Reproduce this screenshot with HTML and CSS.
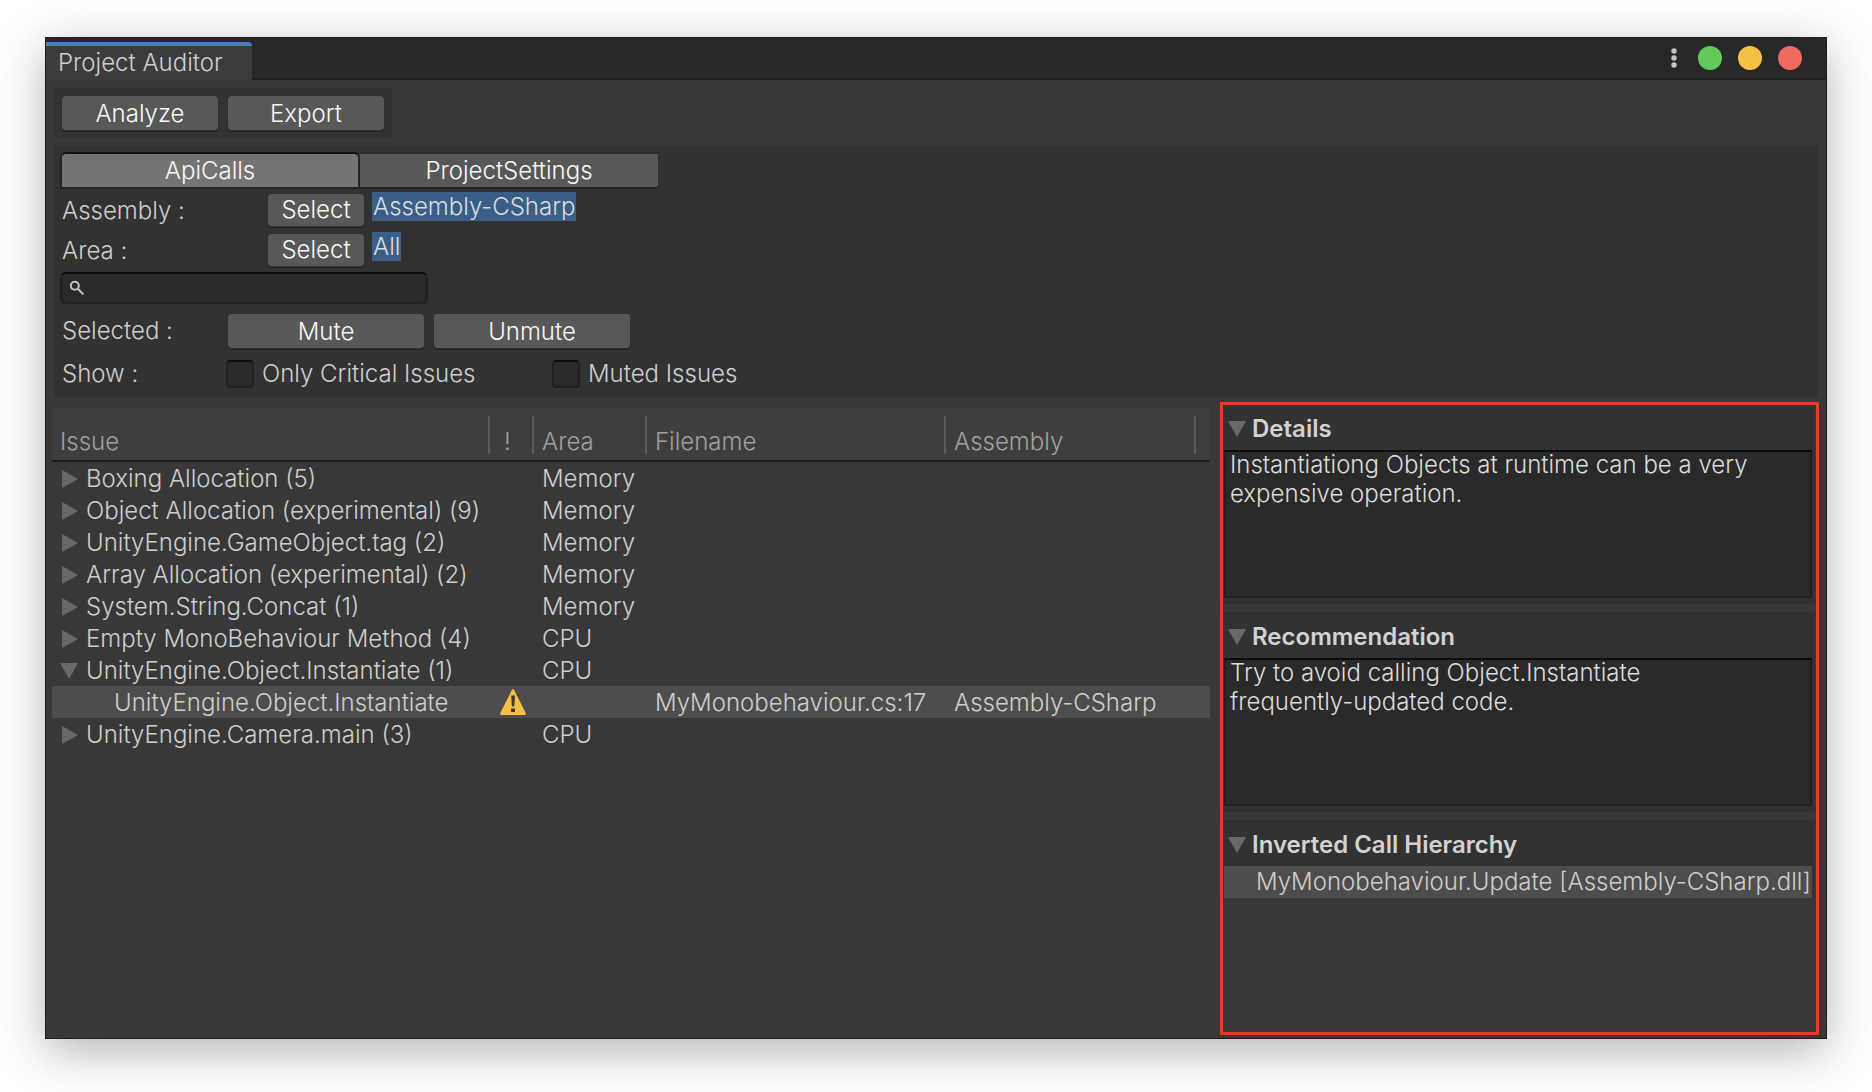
FILE: index.html
```html
<!DOCTYPE html>
<html lang="en">
<head>
<meta charset="utf-8">
<title>Project Auditor</title>
<link rel="stylesheet" href="styles.css">
</head>
<body>
<svg class="sprites" aria-hidden="true">
  <symbol id="closed" viewBox="0 0 18 18"><path d="M2 0 18 9 2 18z"/></symbol>
  <symbol id="open" viewBox="0 0 18 18"><path d="M0 1h18L9 17z"/></symbol>
</svg>
<div class="window">
  <header class="titlebar">
    <h1 class="window-tab">Project Auditor</h1>
    <div class="window-controls">
      <button class="menu" aria-label="Menu"><svg width="6" height="20" viewBox="0 0 6 20"><circle cx="3" cy="3" r="2.7"/><circle cx="3" cy="10" r="2.7"/><circle cx="3" cy="17" r="2.7"/></svg></button>
      <button class="dot green" aria-label="Minimize"></button>
      <button class="dot yellow" aria-label="Maximize"></button>
      <button class="dot red" aria-label="Close"></button>
    </div>
  </header>

  <div class="toolbar">
    <button class="btn action">Analyze</button>
    <button class="btn action">Export</button>
  </div>

  <section class="filters">
    <nav class="tabs">
      <button class="tab active">ApiCalls</button>
      <button class="tab">ProjectSettings</button>
    </nav>
    <div class="filter-row">
      <span class="filter-name">Assembly :</span>
      <button class="btn select">Select</button>
      <span class="value">Assembly-CSharp</span>
    </div>
    <div class="filter-row">
      <span class="filter-name">Area :</span>
      <button class="btn select">Select</button>
      <span class="value">All</span>
    </div>
    <label class="search">
      <svg width="16" height="16" viewBox="0 0 16 16"><circle cx="5.8" cy="5.8" r="4" /><path d="M8.8 8.8 14.4 14.4"/></svg>
      <input type="text" aria-label="Search issues">
    </label>
    <div class="selected-row">
      <span class="row-name">Selected :</span>
      <button class="btn mute">Mute</button>
      <button class="btn mute">Unmute</button>
    </div>
    <div class="show-row">
      <span class="row-name">Show :</span>
      <label class="check"><input type="checkbox">Only Critical Issues</label>
      <label class="check"><input type="checkbox">Muted Issues</label>
    </div>
  </section>

  <main class="content">
    <div class="issues">
      <table>
        <colgroup><col><col class="c-flag"><col class="c-area"><col class="c-file"><col class="c-assembly"><col class="c-end"></colgroup>
        <thead>
          <tr><th><span>Issue</span></th><th class="flag"><span>!</span></th><th><span>Area</span></th><th><span>Filename</span></th><th><span>Assembly</span></th><td></td></tr>
        </thead>
        <tbody>
          <tr><td><button class="fold"><svg><use href="#closed"/></svg>Boxing Allocation (5)</button></td><td></td><td>Memory</td><td></td><td></td><td></td></tr>
          <tr><td><button class="fold"><svg><use href="#closed"/></svg>Object Allocation (experimental) (9)</button></td><td></td><td>Memory</td><td></td><td></td><td></td></tr>
          <tr><td><button class="fold"><svg><use href="#closed"/></svg>UnityEngine.GameObject.tag (2)</button></td><td></td><td>Memory</td><td></td><td></td><td></td></tr>
          <tr><td><button class="fold"><svg><use href="#closed"/></svg>Array Allocation (experimental) (2)</button></td><td></td><td>Memory</td><td></td><td></td><td></td></tr>
          <tr><td><button class="fold"><svg><use href="#closed"/></svg>System.String.Concat (1)</button></td><td></td><td>Memory</td><td></td><td></td><td></td></tr>
          <tr><td><button class="fold"><svg><use href="#closed"/></svg>Empty MonoBehaviour Method (4)</button></td><td></td><td>CPU</td><td></td><td></td><td></td></tr>
          <tr><td><button class="fold"><svg><use href="#open"/></svg>UnityEngine.Object.Instantiate (1)</button></td><td></td><td>CPU</td><td></td><td></td><td></td></tr>
          <tr class="selected"><td class="child">UnityEngine.Object.Instantiate</td><td class="warn"><svg width="26" height="26" viewBox="0 0 26 26" role="img" aria-label="Critical"><path class="sign" d="M12 .8q1-1.400 2 0L25.700 24q.5 2-1 2H1.300q-1.500 0-1-2z"/><path class="mark" d="M11.200 6.500h3.800l-.7 11h-2.400zM11 19.500h4v3.500h-4z"/></svg></td><td></td><td>MyMonobehaviour.cs:17</td><td>Assembly-CSharp</td><td></td></tr>
          <tr><td><button class="fold"><svg><use href="#closed"/></svg>UnityEngine.Camera.main (3)</button></td><td></td><td>CPU</td><td></td><td></td><td></td></tr>
        </tbody>
      </table>
    </div>

    <aside class="inspector">
      <details class="panel" open>
        <summary><svg><use href="#open"/></svg>Details</summary>
        <textarea aria-label="Details" readonly>Instantiationg Objects at runtime can be a very expensive operation.</textarea>
      </details>
      <details class="panel" open>
        <summary><svg><use href="#open"/></svg>Recommendation</summary>
        <textarea aria-label="Recommendation" readonly>Try to avoid calling Object.Instantiate
frequently-updated code.</textarea>
      </details>
      <details class="panel hierarchy" open>
        <summary><svg><use href="#open"/></svg>Inverted Call Hierarchy</summary>
        <div class="call">MyMonobehaviour.Update [Assembly-CSharp.dll]</div>
      </details>
    </aside>
  </main>
</div>
</body>
</html>
```
FILE: styles.css
```css
* { box-sizing: border-box; }

body {
  margin: 0;
  min-height: 100vh;
  padding: 37px 45px 53px;
  display: flex;
  background: #fff;
  color: #cecece;
  font: 300 24px/32px Inter, "Liberation Sans", sans-serif;
}

button, input, textarea { font: inherit; color: inherit; }
button { padding: 0; border: 0; background: none; }
.sprites { position: absolute; width: 0; height: 0; }

.window {
  flex: 1;
  min-width: 0;
  display: flex;
  flex-direction: column;
  background: #383838;
  border: 1px solid #1e1e1e;
  box-shadow: 0 12px 44px rgba(0, 0, 0, .3);
}

/* Title bar */
.titlebar {
  height: 42px;
  display: flex;
  justify-content: space-between;
  align-items: flex-end;
  background: #282828;
  box-shadow: inset 0 -2px #1f1f1f;
}
.window-tab {
  margin: 0;
  width: 206px;
  height: 38px;
  padding-left: 12px;
  border-top: 4px solid #4b7dbf;
  border-top-right-radius: 4px;
  background: #3c3c3c;
  font-size: 24px;
  font-weight: 300;
  line-height: 34px;
}
.window-controls {
  display: flex;
  align-items: center;
  gap: 16px;
  height: 42px;
  padding: 0 24px 2px 0;
}
.menu { display: flex; margin-right: 5px; fill: #c4c4c4; }
.dot { width: 24px; height: 24px; border-radius: 50%; }
.green { background: #61ca58; }
.yellow { background: #f5c043; }
.red { background: #ed6b60; }

/* Buttons */
.btn {
  height: 34px;
  border-radius: 4px;
  background: #585858;
  box-shadow: 0 0 0 1px #303030, 0 2px #242424;
  color: #f8f8f8;
}
.toolbar {
  align-self: flex-start;
  display: flex;
  gap: 10px;
  margin: 8px;
  padding: 8px;
  background: #333;
}
.action, .mute { padding-top: 2px; }
.action { width: 156px; }
.select { width: 96px; height: 32px; }
.mute { width: 196px; }

/* Filters */
.filters {
  margin: 0 8px;
  padding: 6px;
  background: #323232;
}
.tabs { display: flex; margin-bottom: 5px; }
.tab {
  width: 298px;
  height: 37px;
  border: solid #242424;
  border-width: 2px 0;
  border-top-color: #2d2d2d;
  border-bottom-right-radius: 4px;
  background: #585858;
  color: #f8f8f8;
}
.tab.active {
  width: 300px;
  border-width: 2px;
  border-top-color: #101010;
  border-radius: 6px 6px 0 0;
  background: #747474;
}
.filter-row { display: flex; height: 32px; margin-bottom: 8px; }
.filter-name { width: 208px; padding-left: 2px; line-height: 34px; }
.value {
  align-self: flex-start;
  margin: -2px 0 0 8px;
  padding: 0 1px;
  background: #395e87;
  color: #dcdcdc;
  line-height: 29px;
}
.search {
  display: flex;
  align-items: center;
  width: 368px;
  height: 32px;
  margin-top: -2px;
  padding-left: 7px;
  border: 2px solid #212121;
  border-top-color: #0d0d0d;
  border-radius: 6px;
  background: #2a2a2a;
}
.search svg { fill: none; stroke: #c4c4c4; stroke-width: 2; }
.search input { flex: 1; min-width: 0; height: 26px; border: 0; outline: 0; background: none; }
.selected-row { display: flex; gap: 10px; margin-top: 10px; }
.row-name { width: 158px; padding-left: 2px; line-height: 34px; }
.show-row { display: flex; align-items: center; margin-top: 9px; }
.show-row .row-name { width: 166px; }
.check { display: flex; align-items: center; gap: 8px; width: 326px; }
.check input {
  appearance: none;
  width: 28px;
  height: 28px;
  margin: 0;
  border: 2px solid #212121;
  border-top-color: #0d0d0d;
  border-radius: 4px;
  background: #2a2a2a;
}

/* Issue table */
.content {
  flex: 1;
  display: grid;
  grid-template-columns: minmax(0, 1fr) 599px;
  gap: 10px;
  padding: 5px 7px 3px 6px;
}
.issues { padding-top: 6px; }
table { width: 100%; border-collapse: collapse; table-layout: fixed; }
.c-flag { width: 44px; }
.c-area { width: 113px; }
.c-file { width: 299px; }
.c-assembly { width: 250px; }
.c-end { width: 14px; }
th, td { padding: 0 0 0 8px; height: 32px; text-align: left; white-space: nowrap; }
thead tr { height: 54px; background: #3e3e3e; box-shadow: inset 0 -2px #1f1f1f; }
th { padding: 8px 0; color: #a0a0a0; font-weight: 300; }
th span { display: block; height: 38px; padding: 4px 0 0 8px; border-right: 2px solid #5a5a5a; line-height: 44px; }
.flag span { padding-left: 14px; }
tbody td { padding-top: 2px; line-height: 30px; }
.fold { display: flex; align-items: center; height: 30px; }
.fold svg, summary svg { width: 18px; height: 18px; fill: #686868; }
.fold svg { margin-right: 8px; }
.selected { background: #4d4d4d; }
tbody td.child { padding-left: 62px; }
tbody td.warn { padding: 0 0 0 10px; }
.warn svg { display: block; }
.sign { fill: #f5c043; }
.mark { fill: #3f3a2c; }

/* Inspector */
.inspector {
  display: flex;
  flex-direction: column;
  gap: 8px;
  border: 3px solid #e63d22;
  padding-right: 1px;
}
.panel { background: #323232; padding: 0 3px 6px 1px; }
summary {
  display: flex;
  align-items: center;
  gap: 6px;
  height: 45px;
  padding: 3px 0 0 4px;
  list-style: none;
  color: #d2d2d2;
  font-weight: 600;
}
.panel + .panel summary { height: 46px; }
textarea {
  display: block;
  width: 100%;
  height: 148px;
  padding: 0 6px;
  border: 0;
  outline: 0;
  resize: none;
  overflow: hidden;
  background: #2a2a2a;
  box-shadow: inset 0 2px #0d0d0d, inset 0 0 0 2px #212121;
  color: #dcdcdc;
  line-height: 29px;
}
.hierarchy { padding-bottom: 0; }
.call { padding-left: 32px; background: #4d4d4d; white-space: nowrap; }
```
